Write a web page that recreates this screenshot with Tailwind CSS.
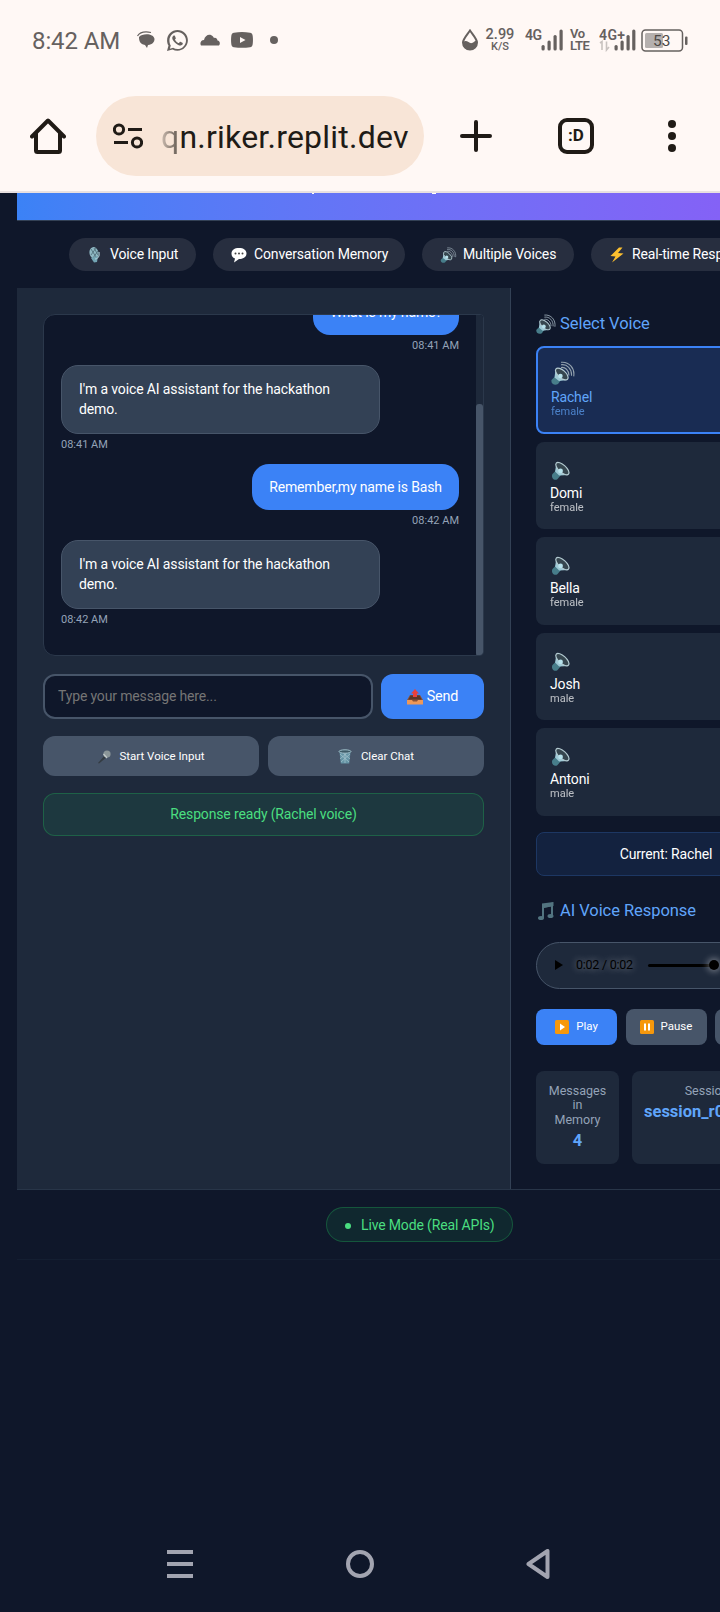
<!DOCTYPE html>
<html lang="en">
<head>
  <meta charset="UTF-8">
  <meta name="viewport" content="width=device-width, initial-scale=1.0">
  <title>Voice AI Assistant</title>
  <script src="https://cdn.jsdelivr.net/npm/@tailwindcss/browser@4"></script>
</head>
<body class="bg-[#0f172a] font-['Roboto',sans-serif] w-[720px] h-[1612px] overflow-hidden flex flex-col text-white text-[14px]">

  <!-- Shared icons -->
  <svg class="hidden">
    <symbol id="speaker" viewBox="0 0 24 24">
      <path d="M2.500 16.500l4-4 5.500 5-4 4.500c-3 2-7-1-5.500-5.500z" fill="#477d8a"/>
      <path d="M7 5l-1.500 8.500 4.500 4.500 10-.5z" fill="#9fc9d6"/>
      <ellipse cx="13.500" cy="10.500" rx="4" ry="9" transform="rotate(-48 13.500 10.500)" fill="#36464f" stroke="#b4cbd2" stroke-width="1.300"/>
      <circle cx="11.500" cy="13" r="2.600" fill="#b8e2ec"/>
    </symbol>
    <symbol id="speaker-loud" viewBox="0 0 24 24">
      <path d="M.5 19l4-4 5.500 4-3 4c-3 2-7.500 0-6.500-4z" fill="#477d8a"/>
      <path d="M4.500 8.500l-1 8 4.500 3.500 8.500-1z" fill="#9fc9d6"/>
      <ellipse cx="10.800" cy="13" rx="3.800" ry="7.800" transform="rotate(-48 10.800 13)" fill="#36464f" stroke="#b4cbd2" stroke-width="1.200"/>
      <circle cx="9.400" cy="15" r="2.300" fill="#b8e2ec"/>
      <path d="M10 6.500c4-1 8 3 8 8M10 3.800c6-1 11 4 10.500 11M10 1.300c8-1 14 6 12.700 14" fill="none" stroke="#93a2ae" stroke-width="1.100"/>
    </symbol>
  </svg>

  <!-- Status Bar -->
  <div class="bg-[#fff8f5] h-[80px] shrink-0 flex items-center pl-[32px] pr-[32px] text-[#66615f]">
    <span class="text-[24px] w-[105px] tracking-[-0.100px] pt-[1px]">8:42 AM</span>
    <svg class="w-[18px] h-[18px]" viewBox="0 0 18 18" fill="currentColor">
      <path d="M2 6C5 2 17 2 17.500 8c0 3-2 5.500-6.500 6l-1 3-2-3C3 13 2 10 2 6z"/>
      <path d="M.5 5C3 1 9 .5 14 1.500" fill="none" stroke="currentColor" stroke-width="1.200"/>
    </svg>
    <svg class="w-[21px] h-[21px] ml-[12px]" viewBox="0 0 24 24" fill="currentColor">
      <path d="M17.472 14.382c-.297-.149-1.758-.867-2.030-.967-.273-.099-.471-.148-.67.150-.197.297-.767.966-.94 1.164-.173.199-.347.223-.644.075-.297-.150-1.255-.463-2.390-1.475-.883-.788-1.480-1.761-1.653-2.059-.173-.297-.018-.458.130-.606.134-.133.298-.347.446-.52.149-.174.198-.298.298-.497.099-.198.050-.371-.025-.52-.075-.149-.669-1.612-.916-2.207-.242-.579-.487-.5-.669-.51-.173-.008-.371-.010-.57-.010-.198 0-.52.074-.792.372-.272.297-1.040 1.016-1.040 2.479 0 1.462 1.065 2.875 1.213 3.074.149.198 2.096 3.200 5.077 4.487 2.980 1.288 2.980.858 3.517.805.538-.050 1.758-.718 2.006-1.413.248-.694.248-1.289.173-1.413-.074-.124-.272-.198-.57-.347zM12 0C5.400 0 .1 5.300.1 11.900c0 2.100.5 4.100 1.600 5.900L0 24l6.300-1.700c1.700.9 3.700 1.400 5.700 1.400 6.600 0 11.900-5.300 11.900-11.900S18.600 0 12 0zm0 21.800c-1.800 0-3.500-.5-5-1.400l-3.700 1 1-3.700c-1-1.600-1.500-3.400-1.500-5.800C2.800 6.500 7 2.200 12 2.200s9.700 4.300 9.700 9.700-4.300 9.900-9.700 9.900z"/>
    </svg>
    <svg class="w-[20px] h-[12px] ml-[12px]" viewBox="0 0 20 12" fill="currentColor">
      <path d="M1 11.500C-.5 9 1 6 4 6 5 1 10-1 13 2.500l1 1.500c2-.5 3 .5 3.500 2.500C20 7 20.500 9.500 19 11.500z"/>
    </svg>
    <svg class="w-[22px] h-[16px] ml-[11px]" viewBox="0 0 22 16">
      <path d="M3 .7Q11-.5 19 .7 21.500 1 21.700 4q.5 4 0 8-.2 3-2.700 3.300-8 1-16 0Q.5 15 .3 12q-.5-4 0-8Q.5 1 3 .7z" fill="currentColor"/>
      <path d="M9 5l5.500 3L9 11z" fill="#fff8f5"/>
    </svg>
    <span class="w-2 h-2 rounded-full bg-[#66615f] ml-[17px]"></span>

    <div class="ml-auto flex items-center">
      <svg class="w-[18px] h-[22px]" viewBox="0 0 18 22">
        <path d="M9 1.500C6 6 2 10 2 13.500a7 7 0 0 0 14 0C16 10 12 6 9 1.500z" fill="none" stroke="currentColor" stroke-width="2"/>
        <path d="M2 13c4-3 6 2 9 1 2 0 3-3 5-2 1 5-3 9-7 9s-7-3-7-8z" fill="currentColor"/>
      </svg>
      <div class="ml-[6px] w-[30px] flex flex-col items-center font-medium">
        <span class="text-[14.500px] leading-[13px]">2.99</span>
        <span class="text-[11px] leading-[11px]">K/S</span>
      </div>
      <svg class="w-[40px] h-[24px] ml-[10px]" viewBox="0 0 40 24" fill="currentColor">
        <text x="0" y="12" font-size="14" font-weight="600" textLength="17">4G</text>
        <rect x="16.500" y="17" width="3.200" height="5.500" rx="1.500"/><rect x="22.500" y="12.500" width="3.200" height="10" rx="1.500"/><rect x="28.500" y="7" width="3.200" height="15.500" rx="1.500"/><rect x="34.500" y="1.500" width="3.200" height="21" rx="1.500"/>
      </svg>
      <div class="ml-[5px] w-[22px] flex flex-col font-semibold text-[13px] leading-[12px] tracking-[-0.500px]">
        <span>Vo</span><span>LTE</span>
      </div>
      <svg class="w-[38px] h-[24px] ml-[7px]" viewBox="0 0 38 24" fill="currentColor">
        <text x="0" y="12" font-size="14" font-weight="600" textLength="26">4G+</text>
        <path d="M1 15l2-1.500V22M7.500 13.500V22l2.500-3" fill="none" stroke="#c8c2bf" stroke-width="1.600"/>
        <rect x="15.500" y="17" width="3.200" height="5.500" rx="1.500"/><rect x="21.500" y="12.500" width="3.200" height="10" rx="1.500"/><rect x="27.500" y="7" width="3.200" height="15.500" rx="1.500"/><rect x="33.200" y="1.500" width="3.200" height="21" rx="1.500"/>
      </svg>
      <svg class="w-[47px] h-[23px] ml-[4px]" viewBox="0 0 47 23">
        <rect x="1" y="1" width="40.500" height="21" rx="3.500" fill="none" stroke="#66615f" stroke-width="1.500"/>
        <rect x="4" y="4" width="18" height="15" rx="1.500" fill="#b5b0ae"/>
        <rect x="44" y="7.500" width="2.500" height="8.500" rx="1" fill="#66615f"/>
        <text x="12" y="17" font-size="15.500" fill="#4d4947">53</text>
      </svg>
    </div>
  </div>

  <!-- Browser Bar -->
  <div class="bg-[#fff8f5] h-[113px] shrink-0 flex pt-[16px] pl-[30px] border-b-2 border-[#e8e0e0] text-[#201b16]">
    <div class="h-[80px] flex items-center">
      <svg class="w-[36px] h-[36px]" viewBox="0 0 36 36" fill="none" stroke="currentColor" stroke-width="4" stroke-linecap="round" stroke-linejoin="round">
        <path d="M2 18.500L18 2.500l16 16M6 15v17.500q0 1.500 1.500 1.500h21q1.500 0 1.500-1.500V15"/>
      </svg>
      <div class="ml-[30px] w-[328px] h-[80px] rounded-full bg-[#f8e5d7] flex items-center pl-[17px]">
        <svg class="w-[30px] h-[26px]" viewBox="0 0 30 26" fill="none" stroke="currentColor" stroke-width="3">
          <circle cx="6" cy="6.500" r="4.600"/><path d="M15 6.500h14M1 19.500h14"/><circle cx="24" cy="19.500" r="4.600"/>
        </svg>
        <span class="ml-[18px] pt-[2px] text-[32px] tracking-[0.220px] whitespace-nowrap"><span class="bg-linear-to-r from-[#201b16]/20 to-[#201b16]/70 bg-clip-text text-transparent">q</span>n.riker.replit.dev</span>
      </div>
      <svg class="w-[32px] h-[32px] ml-[36px]" viewBox="0 0 32 32" stroke="currentColor" stroke-width="4" stroke-linecap="round"><path d="M2 16h28M16 2v28"/></svg>
      <div class="ml-[66px] w-[36px] h-[36px] border-4 border-[#201b16] rounded-[9px] flex items-center justify-center text-[17px] font-bold">:D</div>
      <svg class="w-[8px] h-[32px] ml-[74px]" viewBox="0 0 8 32" fill="currentColor"><circle cx="4" cy="4" r="4"/><circle cx="4" cy="16" r="4"/><circle cx="4" cy="28" r="4"/></svg>
    </div>
  </div>

  <!-- App -->
  <div class="ml-[17px] w-[805px] shrink-0 flex flex-col tracking-[-0.150px]">
    <header class="h-[28px] bg-linear-to-r from-[#3b82f6] to-[#8b5cf6] border-b border-[#334155]">
      <svg class="w-full h-[2px]" viewBox="0 0 805 2" fill="#fff"><rect x="295" y="0" width="2" height="1"/><rect x="415" y="0" width="4" height="1"/></svg>
    </header>

    <!-- Features -->
    <div class="h-[67px] flex items-center gap-[17px] pl-[52px] whitespace-nowrap">
      <div class="w-[127px] h-[33px] shrink-0 rounded-full bg-[#272e3f] flex items-center pl-[18px]">
        <svg class="w-[16px] h-[16px] mr-[7px]" viewBox="0 0 16 16"><ellipse cx="7" cy="6" rx="4.500" ry="6" transform="rotate(-12 7 6)" fill="#8fb8c3"/><path d="M4 2l5 8M7 1l4 7M9 1L4 8M11 4l-5 7" stroke="#4d6975" stroke-width=".8"/><path d="M4 11l7-2-1 6-3 .5z" fill="#73a5b4"/><path d="M12 5c1 4-1 7-4 7" fill="none" stroke="#b4d2da"/></svg>
        <span>Voice Input</span>
      </div>
      <div class="w-[192px] h-[33px] shrink-0 rounded-full bg-[#272e3f] flex items-center pl-[18px]">
        <svg class="w-[16px] h-[16px] mr-[7px]" viewBox="0 0 16 16"><path d="M8 1c4.500 0 7.500 2 7.500 5.500S12 12 8 12l-5 3.500 1-4C1.500 10.500.5 9 .5 6.500.5 3 3.500 1 8 1z" fill="#fff"/><circle cx="4.500" cy="6.500" r="1" fill="#444"/><circle cx="8" cy="6.500" r="1" fill="#444"/><circle cx="11.500" cy="6.500" r="1" fill="#444"/></svg>
        <span>Conversation Memory</span>
      </div>
      <div class="w-[152px] h-[33px] shrink-0 rounded-full bg-[#272e3f] flex items-center pl-[18px]">
        <svg class="w-[17px] h-[16px] mr-[6px]"><use href="#speaker-loud"/></svg>
        <span>Multiple Voices</span>
      </div>
      <div class="w-[178px] h-[33px] shrink-0 rounded-full bg-[#272e3f] flex items-center pl-[18px]">
        <svg class="w-[16px] h-[16px] mr-[7px]" viewBox="0 0 16 16"><path d="M10 .5L1.500 9 6.500 9.500 3 15.500 14.500 6.500 9 6 13.500.5z" fill="#fdc02f"/></svg>
        <span>Real-time Responses</span>
      </div>
    </div>

    <div class="h-[902px] flex border-b border-[#283548]">
      <!-- Chat Panel -->
      <div class="w-[494px] bg-[#1e293b] border-r border-[#334155] pt-[26px] pl-[26px]">
        <div class="w-[441px] h-[342px] rounded-l-xl rounded-r-[4px] border border-[#2b384b] bg-[#0f172a] overflow-hidden flex">
          <div class="w-[433px] h-full pl-[17px] pr-[17px] flex flex-col justify-end pb-[29px]">
            <div class="self-end w-[146px] h-[47px] shrink-0 rounded-[17px] bg-[#3b82f6] flex items-center justify-center pt-[2px]">What is my name?</div>
            <div class="self-end mt-[4px] h-[13px] shrink-0 text-[11px] leading-[13px] tracking-normal text-[#94a3b8]">08:41 AM</div>
            <div class="mt-[13px] w-[319px] h-[69px] shrink-0 rounded-[17px] border border-[#475569] bg-[#334155] pt-[13px] pl-[17px] leading-[20px] tracking-[-0.120px]">I'm a voice AI assistant for the hackathon<br>demo.</div>
            <div class="mt-[4px] h-[13px] shrink-0 text-[11px] leading-[13px] tracking-normal text-[#94a3b8]">08:41 AM</div>
            <div class="mt-[13px] self-end w-[207px] h-[46px] shrink-0 rounded-[17px] bg-[#3b82f6] flex items-center justify-center">Remember,my name is Bash</div>
            <div class="self-end mt-[4px] h-[13px] shrink-0 text-[11px] leading-[13px] tracking-normal text-[#94a3b8]">08:42 AM</div>
            <div class="mt-[13px] w-[319px] h-[69px] shrink-0 rounded-[17px] border border-[#475569] bg-[#334155] pt-[13px] pl-[17px] leading-[20px] tracking-[-0.120px]">I'm a voice AI assistant for the hackathon<br>demo.</div>
            <div class="mt-[4px] h-[13px] shrink-0 text-[11px] leading-[13px] tracking-normal text-[#94a3b8]">08:42 AM</div>
          </div>
          <div class="w-[7px] bg-[#1e293b] pt-[89px]"><div class="h-[252px] rounded-[3px] bg-[#475569]"></div></div>
        </div>

        <div class="mt-[18px] flex gap-2">
          <input type="text" placeholder="Type your message here..." class="w-[330px] h-[45px] rounded-xl border-2 border-[#475569] bg-[#0f172a] px-[13px] pb-[1px] text-[14px] tracking-[-0.150px] placeholder-[#757575]">
          <button class="w-[103px] h-[45px] rounded-xl bg-[#3b82f6] text-[14.400px] flex items-center justify-center gap-[4px]">
            <svg class="w-[16px] h-[16px]" viewBox="0 0 16 16"><path d="M3 6h10l3 5v4H0v-4z" fill="#8c5237"/><path d="M3.500 6.500h9l2 4H1.500z" fill="#5b3628"/><path d="M0 11h5l1 1.500h4L11 11h5v4.500H0z" fill="#ee9858"/><path d="M8 0l4 4.500h-2V8H6V4.500H4z" fill="#e8413d"/></svg>
            <span>Send</span>
          </button>
        </div>

        <div class="mt-[17px] flex gap-[9px] text-[11.500px] tracking-normal">
          <button class="w-[216px] h-[40px] rounded-xl bg-[#475569] flex items-center justify-center gap-[8px] pt-[1px]">
            <svg class="w-[14px] h-[14px]" viewBox="0 0 14 14"><path d="M1 13L8 5l2 2-8 6.500z" fill="#343c42"/><circle cx="10" cy="4" r="3.600" fill="#8b9698"/><path d="M6.500 4l3.500 4" stroke="#c2caca" stroke-width="1.300"/></svg>
            <span>Start Voice Input</span>
          </button>
          <button class="w-[216px] h-[40px] rounded-xl bg-[#475569] flex items-center justify-center gap-[9px] pt-[1px]">
            <svg class="w-[14px] h-[15px]" viewBox="0 0 14 15"><path d="M1.500 3h11l-1.300 11.500H2.800z" fill="#6594a5"/><path d="M2 5l9 8M4 3l8 7M12 5l-9 8M10 3l-8 7M7 4v10" stroke="#a1c1cc" stroke-width=".8"/><ellipse cx="7" cy="2.500" rx="6" ry="1.700" fill="#3e5b67" stroke="#9fc0cb"/></svg>
            <span>Clear Chat</span>
          </button>
        </div>

        <div class="mt-[17px] w-[441px] h-[43px] rounded-xl border border-[#22c55e]/30 bg-[#22c55e]/10 text-[#4ade80] flex items-center justify-center">Response ready (Rachel voice)</div>
      </div>

      <!-- Voice Panel -->
      <div class="w-[311px] pl-[25px] pt-[24px] pr-[26px] flex flex-col">
        <h2 class="h-[23px] flex items-center gap-[4px] pt-[1px] text-[16.500px] tracking-[-0.050px] text-[#60a5fa]"><svg class="w-[20px] h-[20px]"><use href="#speaker-loud"/></svg>Select Voice</h2>

        <div class="mt-[11px] flex flex-col gap-[8px]">
          <div class="h-[87.500px] rounded-lg border-2 border-[#3b82f6] bg-[#192c53] pl-[13px] pt-[13px] text-[#60a5fa]">
            <svg class="w-[24px] h-[24px]"><use href="#speaker-loud"/></svg>
            <div class="leading-[16px] mt-[4px]">Rachel</div>
            <div class="text-[11px] leading-[13px] tracking-normal opacity-70">female</div>
          </div>
          <div class="h-[87.500px] rounded-lg bg-[#1e293b] pl-[14px] pt-[17px]">
            <svg class="w-[22px] h-[22px]"><use href="#speaker"/></svg>
            <div class="leading-[16px] mt-[4px]">Domi</div>
            <div class="text-[11px] leading-[13px] tracking-normal opacity-70">female</div>
          </div>
          <div class="h-[87.500px] rounded-lg bg-[#1e293b] pl-[14px] pt-[17px]">
            <svg class="w-[22px] h-[22px]"><use href="#speaker"/></svg>
            <div class="leading-[16px] mt-[4px]">Bella</div>
            <div class="text-[11px] leading-[13px] tracking-normal opacity-70">female</div>
          </div>
          <div class="h-[87.500px] rounded-lg bg-[#1e293b] pl-[14px] pt-[17px]">
            <svg class="w-[22px] h-[22px]"><use href="#speaker"/></svg>
            <div class="leading-[16px] mt-[4px]">Josh</div>
            <div class="text-[11px] leading-[13px] tracking-normal opacity-70">male</div>
          </div>
          <div class="h-[87.500px] rounded-lg bg-[#1e293b] pl-[14px] pt-[17px]">
            <svg class="w-[22px] h-[22px]"><use href="#speaker"/></svg>
            <div class="leading-[16px] mt-[4px]">Antoni</div>
            <div class="text-[11px] leading-[13px] tracking-normal opacity-70">male</div>
          </div>
        </div>

        <div class="mt-[16px] h-[44px] shrink-0 rounded-lg border border-[#1d3763] bg-[#13223f] flex items-center justify-center pt-[1px]">Current: Rachel</div>

        <h2 class="mt-[23px] h-[23px] flex items-center gap-[4px] pt-[2px] text-[16.500px] tracking-[-0.050px] text-[#60a5fa]">
          <svg class="w-[20px] h-[20px]" viewBox="0 0 20 20" fill="#527480"><path d="M6 4l11-2.500v13h-2v-9L8 7v10H6z"/><path d="M6 2.500L17.500 1v4L6 7z"/><ellipse cx="5" cy="17" rx="3" ry="2"/><ellipse cx="14.500" cy="15" rx="3" ry="2"/></svg>AI Voice Response
        </h2>

        <div class="mt-[20px] h-[47px] shrink-0 rounded-full border border-[#475569] bg-[#1e293b] flex items-center pl-[18px] text-black text-[12.500px]">
          <svg class="w-[8px] h-[10px]" viewBox="0 0 8 10"><path d="M0 0l8 5-8 5z"/></svg>
          <span class="ml-[13px] w-[72px] tracking-[-0.250px] [text-shadow:0_0_7px_rgba(255,255,255,0.5)]">0:02 / 0:02</span>
          <div class="w-[66px] h-[3px] rounded-full bg-black"></div>
          <div class="w-[10px] h-[10px] -ml-[5px] rounded-full bg-black shadow-[0_0_6px_2px_rgba(255,255,255,0.35)]"></div>
        </div>

        <div class="mt-[20px] grid grid-cols-3 gap-[8.500px] text-[11.500px] tracking-normal">
          <button class="h-[36px] rounded-lg bg-[#3b82f6] flex items-center justify-center gap-[7px]">
            <svg class="w-[14px] h-[14px]" viewBox="0 0 14 14"><rect width="14" height="14" rx="1.500" fill="#f6980c"/><path d="M5 3.500l5 3.500-5 3.500z" fill="#fff"/></svg>Play
          </button>
          <button class="h-[36px] rounded-lg bg-[#475569] flex items-center justify-center gap-[7px]">
            <svg class="w-[14px] h-[14px]" viewBox="0 0 14 14"><rect width="14" height="14" rx="1.500" fill="#f6980c"/><path d="M4 3.500h2v7H4zM8 3.500h2v7H8z" fill="#fff"/></svg>Pause
          </button>
          <button class="h-[36px] rounded-lg bg-[#475569] flex items-center justify-center gap-[7px]">
            <svg class="w-[14px] h-[14px]" viewBox="0 0 14 14"><rect width="14" height="14" rx="1.500" fill="#f6980c"/><path d="M4 4h6v6H4z" fill="#fff"/></svg>Stop
          </button>
        </div>

        <div class="mt-[26px] h-[93px] shrink-0 flex gap-[13px] text-center">
          <div class="w-[83px] rounded-lg bg-[#1e293b] pt-[13px]">
            <div class="text-[12.500px] leading-[14.500px] tracking-normal text-[#94a3b8]">Messages<br>in<br>Memory</div>
            <div class="text-[16.500px] leading-[20px] mt-[4px] font-bold text-[#60a5fa]">4</div>
          </div>
          <div class="w-[164px] rounded-lg bg-[#1e293b] pt-[13px] px-[12px]">
            <div class="text-[12.500px] leading-[14.500px] tracking-normal text-[#94a3b8]">Session ID</div>
            <div class="text-[16.500px] leading-[20px] mt-[4px] font-bold text-[#60a5fa] text-left tracking-normal">session_r0</div>
          </div>
        </div>
      </div>
    </div>

    <!-- Footer -->
    <footer class="h-[70px] flex justify-center pt-[17px] border-b border-[#141e31]">
      <div class="w-[187px] h-[35px] rounded-full border border-[#22c55e]/30 bg-[#22c55e]/10 text-[#4ade80] flex items-center pl-[18px] pt-[1px]">
        <span class="w-[6px] h-[6px] rounded-full bg-[#4ade80] mr-[10px] mt-[1px]"></span>Live Mode (Real APIs)
      </div>
    </footer>
  </div>

  <!-- System Navigation -->
  <nav class="mt-auto h-[96px] shrink-0 flex items-center justify-between pl-[167px] pr-[170px] text-[#a2a4b0]">
    <svg class="w-[26px] h-[28px]" viewBox="0 0 26 28" fill="currentColor"><path d="M0 0h26v4H0zM0 12h26v4H0zM0 24h26v4H0z"/></svg>
    <svg class="w-[28px] h-[28px]" viewBox="0 0 28 28" fill="none" stroke="currentColor" stroke-width="4"><circle cx="14" cy="14" r="12"/></svg>
    <svg class="w-[24px] h-[30px]" viewBox="0 0 24 30" fill="none" stroke="currentColor" stroke-width="4" stroke-linejoin="round"><path d="M2.500 15L21.500 2v26z"/></svg>
  </nav>
</body>
</html>
